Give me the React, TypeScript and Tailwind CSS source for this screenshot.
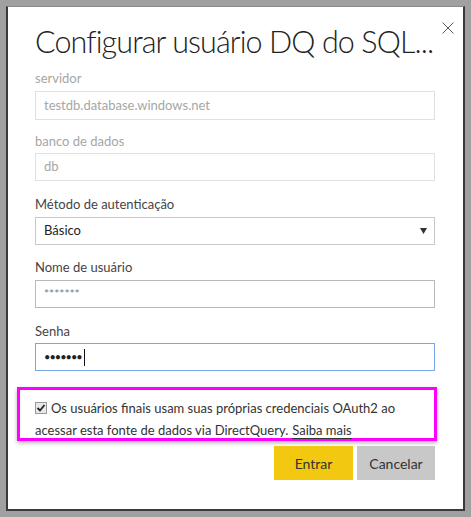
import React from "react";

export default function App() {
  const font = { fontFamily: 'Lato, "Open Sans", sans-serif' };
  return (
    <div className="w-[471px] h-[517px] bg-[#a0a0a0] p-[6px]" style={font}>
      <div className="relative w-full h-full bg-white border-l-2 border-r-2 border-b-2 border-t border-l-[#3a3a3a] border-r-[#3a3a3a] border-b-[#3a3a3a] border-t-[#8a8a8a] pl-[27px] pr-[28px] pt-[14px]">
        <button className="absolute right-[9px] top-[15px] w-[12px] h-[12px]">
          <svg width="12" height="12" viewBox="0 0 12 12">
            <path d="M0.5 0.5 L11.5 11.5 M11.5 0.5 L0.5 11.5" stroke="#555" strokeWidth="1" fill="none" />
          </svg>
        </button>
        <h1 className="text-[30.5px] leading-[40px] font-light text-[#222] whitespace-nowrap tracking-[-0.9px]">
          Configurar usuário DQ do SQL...
        </h1>
        <div className="mt-[8px] text-[13px] leading-[18px] text-[#a6a6a6]">servidor</div>
        <div className="mt-[4px] h-[29px] border border-[#e1e1e1] flex items-center px-[8px] text-[13px] text-[#a6a6a6]">
          testdb.database.windows.net
        </div>
        <div className="mt-[12px] text-[13px] leading-[18px] text-[#a6a6a6]">banco de dados</div>
        <div className="mt-[3px] h-[28px] border border-[#e1e1e1] flex items-center px-[8px] text-[13px] text-[#a6a6a6]">
          db
        </div>
        <div className="mt-[14px] text-[13px] leading-[18px] text-[#444]">Método de autenticação</div>
        <div className="mt-[4px] h-[28px] border border-[#c8c8c8] flex items-center justify-between px-[8px] text-[13px] text-[#222]">
          <span>Básico</span>
          <svg width="7" height="6" viewBox="0 0 7 6" className="mr-[-1px]">
            <path d="M0 0 H7 L3.5 6 Z" fill="#333" />
          </svg>
        </div>
        <div className="mt-[13px] text-[13px] leading-[18px] text-[#444]">Nome de usuário</div>
        <div className="mt-[4px] h-[28px] border border-[#b9b9b9] flex items-center px-[8px] text-[12px] text-[#6d7fa8]">
          *******
        </div>
        <div className="mt-[14px] text-[13px] leading-[18px] text-[#444]">Senha</div>
        <div className="mt-[3px] h-[28px] border border-[#7aa7ea] flex items-center px-[8px] text-[11px] text-[#222]">
          <span className="tracking-[-1px]">•••••••</span>
          <span className="ml-[2px] w-[1px] h-[17px] bg-[#111]" />
        </div>
        <div className="mt-[16px] ml-[-18px] mr-[-2px] h-[54px] border-[3px] border-[#ff00ff] shadow-[0_2px_4px_rgba(0,0,0,0.3)] pl-[15px] pr-[8px] pt-[7px] text-[13px] leading-[22px] text-[#333]">
          <div className="flex items-center whitespace-nowrap">
            <span className="flex mr-[4px] w-[12px] h-[12px] border border-[#999] bg-[#e8e8e8] items-center justify-center">
              <svg width="10" height="10" viewBox="0 0 10 10">
                <path d="M1.5 5 L4 7.5 L8.5 2" stroke="#222" strokeWidth="1.8" fill="none" />
              </svg>
            </span>
            <span>Os usuários finais usam suas próprias credenciais OAuth2 ao</span>
          </div>
          <div className="flex whitespace-nowrap">
            <span>acessar esta fonte de dados via DirectQuery.</span>
            <span className="ml-[4px] underline underline-offset-[3px] decoration-[#333]">Saiba mais</span>
          </div>
        </div>
        <div className="mt-[5px] flex justify-end gap-[4px]">
          <button className="w-[79px] h-[34px] bg-[#f2c811] text-[14px] text-[#333]">Entrar</button>
          <button className="w-[78px] h-[34px] bg-[#c8c8c8] text-[14px] text-[#333]">Cancelar</button>
        </div>
      </div>
    </div>
  );
}
